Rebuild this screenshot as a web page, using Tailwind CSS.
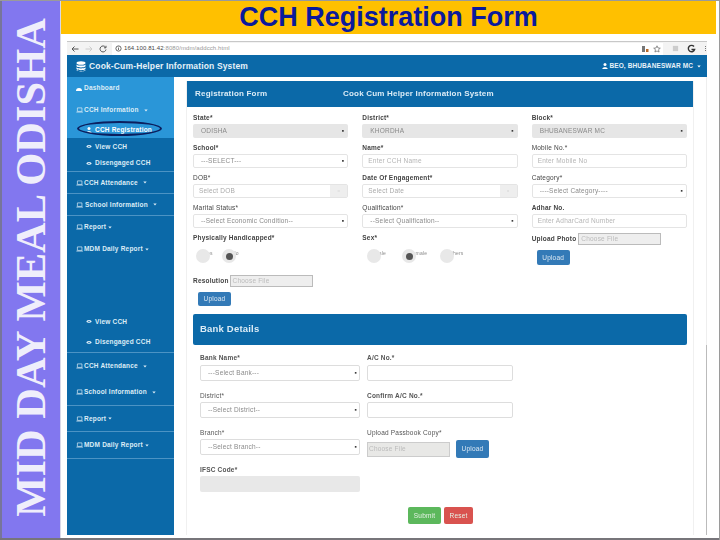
<!DOCTYPE html>
<html>
<head>
<meta charset="utf-8">
<script src="https://cdn.jsdelivr.net/npm/@tailwindcss/browser@4"></script>
</head>
<body class="font-['Liberation_Sans',Arial,sans-serif]">
<svg class="hidden" width="0" height="0">
  <symbol id="lap" viewBox="0 0 10 8"><path d="M2 1h6.5v5H2z M0.5 7h9.5" fill="none" stroke="currentColor" stroke-width="1"/></symbol>
  <symbol id="eye" viewBox="0 0 10 8"><path d="M0.5 4C3 0.8 7 0.8 9.5 4 7 7.2 3 7.2 0.5 4z" fill="currentColor"/><circle cx="5" cy="4" r="1.3" fill="#0b69a8"/></symbol>
  <symbol id="car" viewBox="0 0 6 4"><path d="M0.5 0.5h5L3 3.5z" fill="currentColor"/></symbol>
</svg>
<div class="relative flex w-[720px] h-[540px] overflow-hidden bg-white border-t border-r border-[#9a9a9a]">
  <!-- purple strip -->
  <div class="flex h-[537px] w-[61px] shrink-0 items-center justify-center border-l-2 border-r border-l-[#77759a] border-r-[#d8d8e8] bg-[#8277ef]">
    <div class="[writing-mode:vertical-rl] rotate-180 whitespace-nowrap font-['Liberation_Serif',serif] text-[42.5px] leading-none font-bold text-[#efeefb] mt-[-4px]">MID DAY MEAL ODISHA</div>
  </div>
  <div class="flex h-[537px] w-[658px] flex-col">
    <!-- banner -->
    <div class="flex h-[33px] w-[655px] items-center justify-center bg-[#ffc000] text-[27px] font-bold text-[#0a1a9c]">CCH Registration Form</div>
    <!-- browser -->
    <div class="ml-[6px] mt-[7px] flex h-[494px] w-[640px] flex-col border-t border-[#c8c8c8] blur-[0.35px]">
      <div class="flex h-[13px] items-center bg-[#f3f3f3] text-[#666]">
        <svg class="ml-[4px]" width="8" height="8" viewBox="0 0 8 8"><path d="M7.5 4H1M3.5 1.5L1 4l2.5 2.5" fill="none" stroke="#555" stroke-width="1"/></svg>
        <svg class="ml-[6px]" width="8" height="8" viewBox="0 0 8 8"><path d="M0.5 4H7M4.5 1.5L7 4 4.5 6.5" fill="none" stroke="#ccc" stroke-width="1"/></svg>
        <svg class="ml-[6px]" width="8" height="8" viewBox="0 0 8 8"><path d="M6.5 2.2A3 3 0 1 0 7 4.5M7 0.8v2H5" fill="none" stroke="#555" stroke-width="1"/></svg>
        <div class="ml-[5px] flex h-[12px] w-[551px] items-center bg-white pl-[3px] text-[6px] tracking-[0.1px]">
          <svg width="7" height="7" viewBox="0 0 8 8"><circle cx="4" cy="4" r="3" fill="none" stroke="#555"/><path d="M4 3.5v2.2M4 2v.8" stroke="#555"/></svg>
          <span class="ml-[2px] text-[#444]">164.100.81.42<span class="text-[#999]">:8080/mdm/addcch.html</span></span>
          <span class="flex-1"></span>
          <svg width="8" height="8" viewBox="0 0 8 8"><path d="M1 1h3v6H1z" fill="#777"/><path d="M5 4h2.5v3H5z" fill="#b86a2a"/></svg>
          <svg class="ml-[4px] mr-[2px]" width="8" height="8" viewBox="0 0 8 8"><path d="M4 .8l1 2.2 2.3.2-1.8 1.5.6 2.3L4 6 1.9 7l.6-2.3L.7 3.2 3 3z" fill="none" stroke="#666" stroke-width=".7"/></svg>
        </div>
        <svg class="ml-[9px]" width="7" height="7" viewBox="0 0 8 8"><rect x="1" y="1" width="6" height="6" fill="#ccc"/></svg>
        <svg class="ml-[8px]" width="9" height="9" viewBox="0 0 9 9"><path d="M7 2.5A3.2 3.2 0 1 0 7.6 5.5H4.5" fill="none" stroke="#333" stroke-width="1.4"/></svg>
        <span class="ml-[9px] flex flex-col gap-[1px]"><i class="block h-[1px] w-[1px] bg-[#777]"></i><i class="block h-[1px] w-[1px] bg-[#777]"></i><i class="block h-[1px] w-[1px] bg-[#777]"></i></span>
      </div>
      <!-- app header -->
      <div class="flex h-[22px] items-center bg-[#0b69a8] pl-[9px] pr-[6px] text-white">
        <svg width="10" height="11" viewBox="0 0 10 11"><g fill="#fff"><ellipse cx="5" cy="2" rx="4.5" ry="1.8"/><path d="M.5 3.4c1 1.6 8 1.6 9 0V5.2c-1 1.6-8 1.6-9 0zM.5 6.2c1 1.6 8 1.6 9 0V8c-1 1.6-8 1.6-9 0z"/><path d="M.5 8.8c1 1.6 8 1.6 9 0v.4c-1 1.6-8 1.6-9 0z"/></g></svg>
        <span class="ml-[3px] text-[8.5px] font-bold tracking-[0.15px] text-[#e6f1f8]">Cook-Cum-Helper Information System</span>
        <span class="flex-1"></span>
        <svg width="6" height="6" viewBox="0 0 6 6"><circle cx="3" cy="1.6" r="1.5" fill="#fff"/><path d="M.3 6c0-2.2 5.4-2.2 5.4 0z" fill="#fff"/></svg>
        <span class="ml-[1px] text-[6.5px] font-bold tracking-[0.1px] text-[#e6f1f8]">BEO, BHUBANESWAR MC</span>
        <svg class="ml-[4px]" width="4" height="3"><use href="#car"/></svg>
      </div>
      <div class="flex min-h-0 flex-1">
        <!-- sidebar -->
        <nav class="flex h-[458px] w-[107px] shrink-0 flex-col bg-[#0b69a8] text-[6.5px] font-bold tracking-[0.2px] text-[#dcecf6]">
          <div class="flex flex-col bg-[#2a96d8]">
            <div class="flex h-[22px] items-center gap-[2px] pl-[9px]"><svg width="6" height="5" viewBox="0 0 6 5"><path d="M0 5a3 3 0 1 1 6 0z" fill="#fff"/></svg>Dashboard</div>
            <div class="flex h-[22px] items-center gap-[1px] pl-[9px]"><svg width="7" height="6" class="shrink-0"><use href="#lap"/></svg>CCH Information<svg class="ml-[4px]" width="4" height="3"><use href="#car"/></svg></div>
            <div class="flex h-[17px] items-center gap-[3px] pl-[19px] text-white"><svg width="6" height="6" viewBox="0 0 6 6"><circle cx="3" cy="1.6" r="1.5" fill="#fff"/><path d="M.3 6c0-2.2 5.4-2.2 5.4 0z" fill="#fff"/></svg>CCH Registration</div>
          </div>
          <div class="flex h-[17px] items-center gap-[3px] pl-[19px]"><svg width="6" height="5"><use href="#eye"/></svg>View CCH</div>
          <div class="flex h-[17px] items-center gap-[3px] border-b border-[#4c93c4] pl-[19px]"><svg width="6" height="5"><use href="#eye"/></svg>Disengaged CCH</div>
          <div class="flex h-[22px] items-center gap-[1px] border-b border-[#4c93c4] pl-[9px]"><svg width="7" height="6" class="shrink-0"><use href="#lap"/></svg>CCH Attendance<svg class="ml-[4px]" width="4" height="3"><use href="#car"/></svg></div>
          <div class="flex h-[22px] items-center gap-[1px] border-b border-[#4c93c4] pl-[9px]"><svg width="7" height="6" class="shrink-0"><use href="#lap"/></svg><span class="ml-[1px]">School Information</span><svg class="ml-[4px]" width="4" height="3"><use href="#car"/></svg></div>
          <div class="flex h-[22px] items-center gap-[1px] pl-[9px]"><svg width="7" height="6" class="shrink-0"><use href="#lap"/></svg>Report<svg class="ml-[1px]" width="4" height="3"><use href="#car"/></svg></div>
          <div class="flex h-[22px] items-center gap-[1px] pl-[9px]"><svg width="7" height="6" class="shrink-0"><use href="#lap"/></svg>MDM Daily Report<svg class="ml-[1px]" width="4" height="3"><use href="#car"/></svg></div>
          <div class="h-[51px]"></div>
          <div class="flex h-[21px] items-center gap-[3px] pl-[19px]"><svg width="6" height="5"><use href="#eye"/></svg>View CCH</div>
          <div class="flex h-[21px] items-center gap-[3px] border-b border-[#4c93c4] pl-[19px]"><svg width="6" height="5"><use href="#eye"/></svg>Disengaged CCH</div>
          <div class="flex h-[26px] items-center gap-[1px] pl-[9px]"><svg width="7" height="6" class="shrink-0"><use href="#lap"/></svg>CCH Attendance<svg class="ml-[4px]" width="4" height="3"><use href="#car"/></svg></div>
          <div class="flex h-[27px] items-center gap-[1px] border-b border-[#4c93c4] pl-[9px]"><svg width="7" height="6" class="shrink-0"><use href="#lap"/></svg>School Information<svg class="ml-[4px]" width="4" height="3"><use href="#car"/></svg></div>
          <div class="flex h-[26px] items-center gap-[1px] border-b border-[#4c93c4] pl-[9px]"><svg width="7" height="6" class="shrink-0"><use href="#lap"/></svg>Report<svg class="ml-[1px]" width="4" height="3"><use href="#car"/></svg></div>
          <div class="flex h-[27px] items-center gap-[1px] border-b border-[#4c93c4] pl-[9px]"><svg width="7" height="6" class="shrink-0"><use href="#lap"/></svg>MDM Daily Report<svg class="ml-[1px]" width="4" height="3"><use href="#car"/></svg></div>
        </nav>
        <!-- main -->
        <main class="relative w-[533px] pl-[12px] pt-[4px] text-[6.5px] tracking-[0.2px] text-[#444]">
          <div class="w-[508px] border-l border-r border-[#f0f0f0] h-[454px]">
            <div class="flex h-[26px] items-center bg-[#0b69a8] pl-[8px] text-[8px] font-bold tracking-[0.2px] text-[#dcecf6]"><span class="w-[148px]">Registration Form</span><span>Cook Cum Helper Information System</span></div>
            <div class="ml-[6px] w-[494px] pt-[6px]">
              <div class="grid grid-cols-3 gap-x-[14px] text-[#8a8a8a]">
                <div class="h-[30px]"><div class="h-[10px] leading-[10px] font-bold text-[#444]">State*</div><div class="mt-[1px] flex h-[14px] items-center justify-between rounded-[2px] bg-[#e6e6e6] pl-[8px] pr-[4px]">ODISHA<i class="not-italic text-[#333]">▪</i></div></div>
                <div class="h-[30px]"><div class="h-[10px] leading-[10px] font-bold text-[#444]">District*</div><div class="mt-[1px] flex h-[14px] items-center justify-between rounded-[2px] bg-[#e6e6e6] pl-[8px] pr-[4px]">KHORDHA<i class="not-italic text-[#333]">▪</i></div></div>
                <div class="h-[30px]"><div class="h-[10px] leading-[10px] font-bold text-[#444]">Block*</div><div class="mt-[1px] flex h-[14px] items-center justify-between rounded-[2px] bg-[#e6e6e6] pl-[8px] pr-[4px]">BHUBANESWAR MC<i class="not-italic text-[#333]">▪</i></div></div>
                <div class="h-[30px]"><div class="h-[10px] leading-[10px] font-bold text-[#444]">School*</div><div class="mt-[1px] flex h-[14px] items-center justify-between rounded-[2px] border border-[#e4e4e4] pl-[7px] pr-[3px]">---SELECT---<i class="not-italic text-[#333]">▪</i></div></div>
                <div class="h-[30px]"><div class="h-[10px] leading-[10px] font-bold text-[#444]">Name*</div><div class="mt-[1px] flex h-[14px] items-center rounded-[2px] border border-[#e4e4e4] pl-[5px] text-[#b5b5b5]">Enter CCH Name</div></div>
                <div class="h-[30px]"><div class="h-[10px] leading-[10px] text-[#444]">Mobile No.*</div><div class="mt-[1px] flex h-[14px] items-center rounded-[2px] border border-[#e4e4e4] pl-[5px] text-[#b5b5b5]">Enter Mobile No</div></div>
                <div class="h-[30px]"><div class="h-[10px] leading-[10px] text-[#444]">DOB*</div><div class="mt-[1px] flex h-[14px] items-center justify-between rounded-[2px] border border-[#e4e4e4] pl-[5px] text-[#aaa]">Select DOB<span class="flex h-full w-[17px] items-center justify-center bg-[#eee] text-[#ccc]">▫</span></div></div>
                <div class="h-[30px]"><div class="h-[10px] leading-[10px] font-bold text-[#444]">Date Of Engagement*</div><div class="mt-[1px] flex h-[14px] items-center justify-between rounded-[2px] border border-[#e4e4e4] pl-[5px] text-[#aaa]">Select Date<span class="flex h-full w-[17px] items-center justify-center bg-[#eee] text-[#ccc]">▫</span></div></div>
                <div class="h-[30px]"><div class="h-[10px] leading-[10px] text-[#444]">Category*</div><div class="mt-[1px] flex h-[14px] items-center justify-between rounded-[2px] border border-[#e4e4e4] pl-[7px] pr-[3px]">----Select Category----<i class="not-italic text-[#333]">▪</i></div></div>
                <div class="h-[30px]"><div class="h-[10px] leading-[10px] text-[#444]">Marital Status*</div><div class="mt-[1px] flex h-[14px] items-center justify-between rounded-[2px] border border-[#e4e4e4] pl-[7px] pr-[3px]">--Select Economic Condition--<i class="not-italic text-[#333]">▪</i></div></div>
                <div class="h-[30px]"><div class="h-[10px] leading-[10px] text-[#444]">Qualification*</div><div class="mt-[1px] flex h-[14px] items-center justify-between rounded-[2px] border border-[#e4e4e4] pl-[7px] pr-[3px]">--Select Qualification--<i class="not-italic text-[#333]">▪</i></div></div>
                <div class="h-[30px]"><div class="h-[10px] leading-[10px] font-bold text-[#444]">Adhar No.</div><div class="mt-[1px] flex h-[14px] items-center rounded-[2px] border border-[#e4e4e4] pl-[5px] text-[#b5b5b5]">Enter AdharCard Number</div></div>
                <!-- row 5 -->
                <div>
                  <div class="h-[10px] leading-[10px] font-bold text-[#444]">Physically Handicapped*</div>
                  <div class="ml-[3px] mt-[6px] flex">
                    <div class="flex w-[26px]"><span class="relative z-10 h-[14px] w-[14px] shrink-0 rounded-full bg-[#e8e8e8]"></span><span class="-ml-[6px] text-[5px] leading-[8px]">Yes</span></div>
                    <div class="flex w-[26px]"><span class="relative z-10 flex h-[14px] w-[14px] shrink-0 items-center justify-center rounded-full bg-[#e8e8e8]"><i class="h-[7px] w-[7px] rounded-full bg-[#555]"></i></span><span class="-ml-[4px] text-[5px] leading-[8px]">No</span></div>
                  </div>
                </div>
                <div>
                  <div class="h-[10px] leading-[10px] font-bold text-[#444]">Sex*</div>
                  <div class="ml-[5px] mt-[6px] flex">
                    <div class="flex w-[35px]"><span class="relative z-10 h-[14px] w-[14px] shrink-0 rounded-full bg-[#e8e8e8]"></span><span class="-ml-[7px] text-[5px] leading-[8px]">Male</span></div>
                    <div class="flex w-[38px]"><span class="relative z-10 flex h-[14px] w-[14px] shrink-0 items-center justify-center rounded-full bg-[#e8e8e8]"><i class="h-[7px] w-[7px] rounded-full bg-[#555]"></i></span><span class="-ml-[7px] text-[5px] leading-[8px]">Female</span></div>
                    <div class="flex"><span class="relative z-10 h-[14px] w-[14px] shrink-0 rounded-full bg-[#e8e8e8]"></span><span class="-ml-[7px] text-[5px] leading-[8px]">Others</span></div>
                  </div>
                </div>
                <div>
                  <div class="flex h-[12px] items-center"><span class="font-bold text-[#444]">Upload Photo</span><span class="ml-[2px] flex h-[12px] w-[83px] items-center border border-[#bbb] bg-[#eee] pl-[2px] text-[#bbb]">Choose File</span></div>
                  <button class="ml-[5px] mt-[5px] flex h-[15px] w-[33px] items-center justify-center rounded-[2px] bg-[#337ab7] text-[#dbe8f3]">Upload</button>
                </div>
              </div>
              <div class="mt-[10px] flex h-[12px] items-center"><span class="font-bold text-[#444]">Resolution</span><span class="ml-[1px] flex h-[12px] w-[83px] items-center border border-[#bbb] bg-[#eee] pl-[2px] text-[#bbb]">Choose File</span></div>
              <button class="ml-[5px] mt-[5px] flex h-[14px] w-[33px] items-center justify-center rounded-[2px] bg-[#337ab7] text-[#dbe8f3]">Upload</button>
            </div>
            <div class="ml-[6px] mt-[8px] flex h-[31px] w-[494px] items-center rounded-[2px] bg-[#0b69a8] pl-[7px] text-[9.5px] font-bold text-[#dcecf6]">Bank Details</div>
            <div class="ml-[13px] mt-[8px] flex w-[480px] gap-[7px] text-[#8a8a8a]">
              <div class="w-[160px]">
                <div class="h-[10px] leading-[10px] font-bold text-[#555]">Bank Name*</div>
                <div class="mt-[2px] flex h-[16px] items-center justify-between rounded-[2px] border border-[#ddd] pl-[7px] pr-[2px]">---Select Bank---<i class="not-italic text-[#333]">▪</i></div>
                <div class="mt-[10px] h-[10px] leading-[10px] text-[#555]">District*</div>
                <div class="mt-[1px] flex h-[16px] items-center justify-between rounded-[2px] border border-[#ddd] pl-[7px] pr-[2px]">--Select District--<i class="not-italic text-[#333]">▪</i></div>
                <div class="mt-[10px] h-[10px] leading-[10px] text-[#555]">Branch*</div>
                <div class="mt-[1px] flex h-[16px] items-center justify-between rounded-[2px] border border-[#ddd] pl-[7px] pr-[2px]">--Select Branch--<i class="not-italic text-[#333]">▪</i></div>
                <div class="mt-[10px] h-[10px] leading-[10px] font-bold text-[#555]">IFSC Code*</div>
                <div class="mt-[1px] h-[16px] rounded-[2px] bg-[#e8e8e8]"></div>
              </div>
              <div class="w-[146px]">
                <div class="h-[10px] leading-[10px] font-bold text-[#555]">A/C No.*</div>
                <div class="mt-[2px] h-[16px] rounded-[2px] border border-[#ddd]"></div>
                <div class="mt-[10px] h-[10px] leading-[10px] font-bold text-[#555]">Confirm A/C No.*</div>
                <div class="mt-[1px] h-[16px] rounded-[2px] border border-[#ddd]"></div>
                <div class="mt-[10px] h-[10px] leading-[10px] text-[#555]">Upload Passbook Copy*</div>
                <div class="mt-[2px] flex items-center gap-[6px]">
                  <span class="flex h-[15px] w-[83px] items-center border border-[#ccc] bg-[#e8e8e6] pl-[1px] text-[#bbb]">Choose File</span>
                  <button class="flex h-[18px] w-[33px] items-center justify-center rounded-[2px] bg-[#337ab7] text-[#dbe8f3]">Upload</button>
                </div>
              </div>
            </div>
            <div class="ml-[221px] mt-[15px] flex gap-[3px] text-[#e6f2e6]">
              <button class="flex h-[17px] w-[33px] items-center justify-center rounded-[2px] bg-[#5cb85c]">Submit</button>
              <button class="flex h-[17px] w-[29px] items-center justify-center rounded-[2px] bg-[#d9534f]">Reset</button>
            </div>
          </div>
          <!-- scrollbar -->
          <div class="absolute right-0 top-0 h-full w-[1px] bg-[#eee]"><div class="mt-[268px] h-[190px] w-[1px] bg-[#bbb]"></div></div>
        </main>
      </div>
    </div>
  </div>
  <!-- hand-drawn highlight round the menu item -->
  <div class="absolute left-[77px] top-[120px] h-[15px] w-[85px] rounded-[50%] border-2 border-[#0b1f5e]"></div>
  <div class="absolute bottom-0 left-0 h-[2px] w-full bg-[#77757a]"></div>
</div>
</body>
</html>
